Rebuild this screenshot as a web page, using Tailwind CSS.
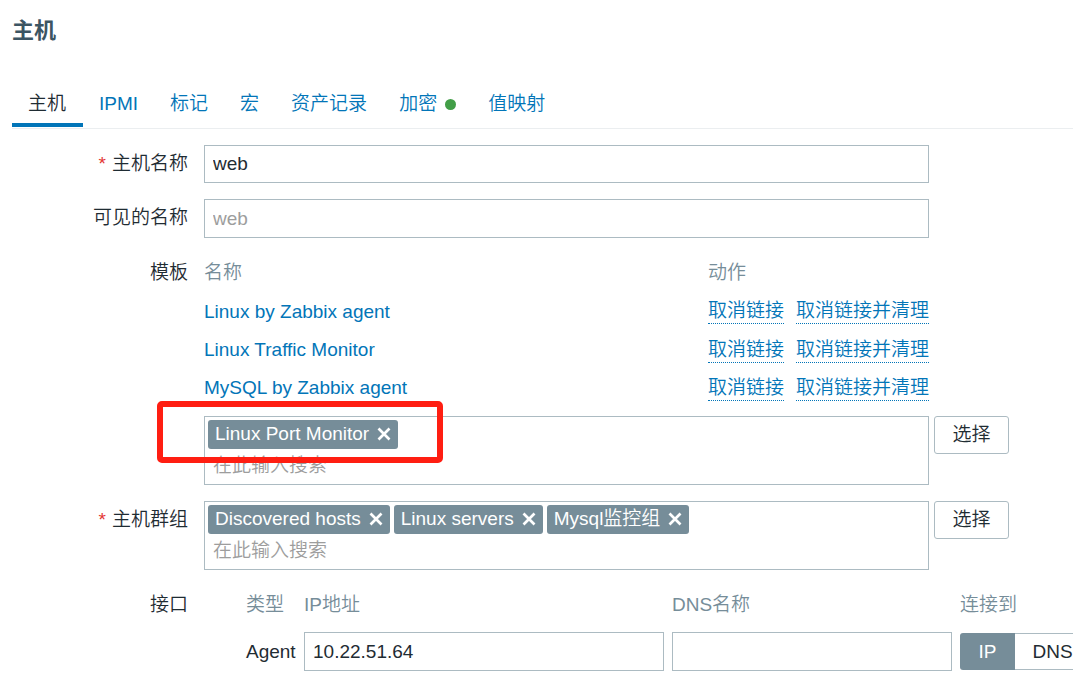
<!DOCTYPE html>
<html lang="zh-CN">
<head>
<meta charset="utf-8">
<meta name="viewport" content="width=device-width, initial-scale=1">
<title>主机</title>
<script src="https://cdn.jsdelivr.net/npm/@tailwindcss/browser@4"></script>
</head>
<body class="bg-white overflow-x-hidden font-['Liberation_Sans','Noto_Sans_CJK_SC',sans-serif] font-[350] text-[19px] leading-6 text-[#1f2c33]">
<svg class="hidden" aria-hidden="true">
  <symbol id="cross" viewBox="0 0 14 14"><path d="M1.5 1.5 L12.5 12.5 M12.5 1.5 L1.5 12.5" fill="none" stroke="currentColor" stroke-width="2.7"/></symbol>
</svg>
<header class="px-3 pt-4">
  <h1 class="text-[22px] leading-[30px] font-bold text-[#3c5563]">主机</h1>
</header>
<main class="pl-3 pt-[34px]">
  <nav class="flex h-[49px] items-stretch border-b border-[#ebeef0] pb-px text-[#0275b8]">
    <a href="#host" aria-current="page" class="border-b-4 border-[#0275b8] pl-4 pr-[17px] pt-3 text-[#1f2c33]">主机</a>
    <a href="#ipmi" class="px-4 pt-3">IPMI</a>
    <a href="#tags" class="px-4 pt-3">标记</a>
    <a href="#macros" class="px-4 pt-3">宏</a>
    <a href="#inventory" class="px-4 pt-3">资产记录</a>
    <a href="#encryption" class="flex items-start gap-2 px-4 pt-3">加密<span class="mt-[7px] size-[11px] rounded-full bg-[#429e47]"></span></a>
    <a href="#valuemap" class="px-4 pt-3">值映射</a>
  </nav>
  <form class="flex flex-col gap-4 pt-4">
    <div class="flex gap-4">
      <label for="name" class="w-44 shrink-0 pt-[7px] text-right"><span class="mr-[6px] text-[#e33734]">*</span>主机名称</label>
      <input id="name" value="web" class="h-[38px] min-w-0 max-w-[725px] flex-1 border border-[#acbbc2] px-2 outline-none">
    </div>
    <div class="flex gap-4">
      <label for="visible" class="w-44 shrink-0 pt-[7px] text-right">可见的名称</label>
      <input id="visible" placeholder="web" class="h-[39px] min-w-0 max-w-[725px] flex-1 border border-[#acbbc2] px-2 outline-none placeholder:text-[#9d9d9d]">
    </div>
    <div class="flex gap-4">
      <label for="template" class="w-44 shrink-0 pt-[7px] text-right">模板</label>
      <div class="min-w-0 flex-1">
        <table class="w-full max-w-[725px] text-[#0275b8]">
          <thead>
            <tr class="h-[38px] text-left text-[#768d99]"><th class="font-[350]">名称</th><th class="w-[221px] font-[350]">动作</th></tr>
          </thead>
          <tbody>
            <tr class="h-[39px]"><td><a href="#t1">Linux by Zabbix agent</a></td><td><div class="flex justify-between whitespace-nowrap"><button type="button" class="border-b border-dotted border-[#0275b8]">取消链接</button><button type="button" class="border-b border-dotted border-[#0275b8]">取消链接并清理</button></div></td></tr>
            <tr class="h-[38px]"><td><a href="#t2">Linux Traffic Monitor</a></td><td><div class="flex justify-between whitespace-nowrap"><button type="button" class="border-b border-dotted border-[#0275b8]">取消链接</button><button type="button" class="border-b border-dotted border-[#0275b8]">取消链接并清理</button></div></td></tr>
            <tr class="h-[38px]"><td><a href="#t3">MySQL by Zabbix agent</a></td><td><div class="flex justify-between whitespace-nowrap"><button type="button" class="border-b border-dotted border-[#0275b8]">取消链接</button><button type="button" class="border-b border-dotted border-[#0275b8]">取消链接并清理</button></div></td></tr>
          </tbody>
        </table>
        <div class="relative mt-[9px] flex items-start gap-[5px]">
          <div class="h-[69px] min-w-0 max-w-[725px] flex-1 border border-[#acbbc2] px-[3px] pt-[3px]">
            <div class="flex gap-1 text-white">
              <span class="flex h-[29px] items-start gap-2 rounded-[3px] bg-[#768d99] px-[7px] pt-[2px]">Linux Port Monitor<button type="button" aria-label="移除" class="mt-[5px]"><svg class="size-[14px]"><use href="#cross"/></svg></button></span>
            </div>
            <input id="template" placeholder="在此输入搜索" class="mt-px h-[32px] w-full px-[5px] outline-none placeholder:text-[#9d9d9d]">
          </div>
          <button type="button" class="h-[38px] w-[75px] rounded-[3px] border border-[#acbbc2]">选择</button>
          <div class="pointer-events-none absolute -top-[15px] -left-[47px] h-[62px] w-[286px] rounded-[5px] border-6 border-[#ff1e12]"></div>
        </div>
      </div>
    </div>
    <div class="flex gap-4">
      <label for="groups" class="w-44 shrink-0 pt-[7px] text-right"><span class="mr-[6px] text-[#e33734]">*</span>主机群组</label>
      <div class="flex min-w-0 flex-1 items-start gap-[5px]">
        <div class="h-[69px] min-w-0 max-w-[725px] flex-1 border border-[#acbbc2] px-[3px] pt-[3px]">
          <div class="flex gap-1 whitespace-nowrap text-white">
            <span class="flex h-[29px] items-start gap-2 rounded-[3px] bg-[#768d99] px-[7px] pt-[2px]">Discovered hosts<button type="button" aria-label="移除" class="mt-[5px]"><svg class="size-[14px]"><use href="#cross"/></svg></button></span>
            <span class="flex h-[29px] items-start gap-2 rounded-[3px] bg-[#768d99] px-[7px] pt-[2px]">Linux servers<button type="button" aria-label="移除" class="mt-[5px]"><svg class="size-[14px]"><use href="#cross"/></svg></button></span>
            <span class="flex h-[29px] items-start gap-2 rounded-[3px] bg-[#768d99] px-[7px] pt-[2px]">Mysql监控组<button type="button" aria-label="移除" class="mt-[5px]"><svg class="size-[14px]"><use href="#cross"/></svg></button></span>
          </div>
          <input id="groups" placeholder="在此输入搜索" class="mt-px h-[32px] w-full px-[5px] outline-none placeholder:text-[#9d9d9d]">
        </div>
        <button type="button" class="h-[38px] w-[75px] rounded-[3px] border border-[#acbbc2]">选择</button>
      </div>
    </div>
    <div class="flex gap-4">
      <span class="w-44 shrink-0 pt-[7px] text-right">接口</span>
      <div class="min-w-0 flex-1 pl-[42px]">
        <table class="table-fixed w-[868px] text-left">
          <thead>
            <tr class="h-[46px] align-top text-[#768d99]"><th class="w-[58px] pt-[7px] font-[350]">类型</th><th class="w-[368px] pt-[7px] font-[350]">IP地址</th><th class="w-[288px] pt-[7px] font-[350]">DNS名称</th><th class="pt-[7px] font-[350]">连接到</th></tr>
          </thead>
          <tbody>
            <tr>
              <td>Agent</td>
              <td class="pr-2"><input aria-label="IP地址" value="10.22.51.64" class="block h-[39px] w-full border border-[#acbbc2] px-2 outline-none"></td>
              <td class="pr-2"><input aria-label="DNS名称" class="block h-[39px] w-full border border-[#acbbc2] px-2 outline-none"></td>
              <td>
                <div class="flex h-[37px]">
                  <label class="flex w-[55px] cursor-pointer items-center justify-center rounded-l-[3px] bg-[#768d99] text-white"><input type="radio" name="useip" checked class="sr-only">IP</label>
                  <label class="flex w-[76px] cursor-pointer items-center justify-center rounded-r-[3px] border border-l-0 border-[#acbbc2]"><input type="radio" name="useip" class="sr-only">DNS</label>
                </div>
              </td>
            </tr>
          </tbody>
        </table>
      </div>
    </div>
  </form>
</main>
</body>
</html>
